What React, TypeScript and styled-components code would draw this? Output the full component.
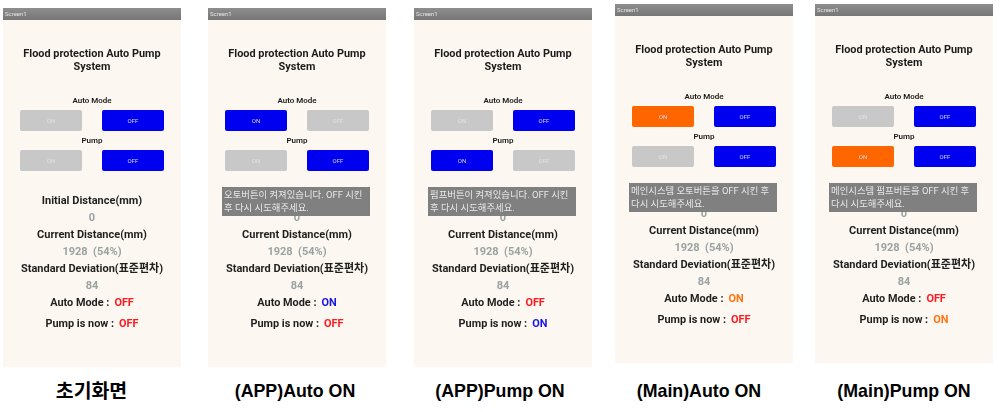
import React from 'react';
import styled, { createGlobalStyle } from 'styled-components';

const GlobalStyle = createGlobalStyle`
    html, body {
        margin: 0;
        padding: 0;
        background: #ffffff;
    }
    body {
        font-family: Roboto, "Noto Sans CJK KR", sans-serif;
    }
`;

const Board = styled.div`
    display: grid;
    grid-template-columns: 205px 206px 201px 200px 178px;
    width: 1001px;
    height: 412px;
    padding-left: 3px;
    box-sizing: border-box;
    overflow: hidden;
`;

const Column = styled.section`
    display: flex;
    flex-direction: column;
    width: 178px;
`;

const Phone = styled.div<{ $top: number }>`
    position: relative;
    display: flex;
    flex-direction: column;
    height: 359px;
    margin-top: ${({ $top }) => $top}px;
    background: #fcf7f0;
    filter: blur(0.5px);
`;

const TitleBar = styled.div`
    height: 12px;
    padding-left: 2px;
    background: linear-gradient(#8e8e8e, #767676);
    color: #e4e4e4;
    font-size: 6px;
    line-height: 12px;
`;

const Title = styled.h1`
    margin: 27px 0 0;
    padding: 0 16px;
    color: #1c1c1c;
    font-size: 10.9px;
    font-weight: 700;
    line-height: 13px;
    text-align: center;
`;

const ControlLabel = styled.div<{ $gap: number }>`
    margin-top: ${({ $gap }) => $gap}px;
    color: #1c1c1c;
    font-size: 8px;
    font-weight: 600;
    line-height: 10px;
    text-align: center;
`;

const ButtonRow = styled.div`
    display: flex;
    justify-content: space-between;
    margin-top: 4px;
    padding: 0 17px;
`;

type Tone = 'idle' | 'blue' | 'orange';

const toneColors: Record<Tone, string> = {
    idle: '#c8c8c8',
    blue: '#0000f0',
    orange: '#ff6600',
};

const Toggle = styled.div<{ $tone: Tone }>`
    width: 62px;
    height: 21px;
    border-radius: 2px;
    background: ${({ $tone }) => toneColors[$tone]};
    color: ${({ $tone }) => ($tone === 'idle' ? '#e2e2e2' : '#d8d8ff')};
    font-size: 6px;
    line-height: 21px;
    text-align: center;
`;

const Readouts = styled.div`
    display: flex;
    flex-direction: column;
    align-items: center;
    margin-top: 21px;
`;

const ReadoutTitle = styled.div`
    color: #1f1f1f;
    font-size: 11px;
    font-weight: 700;
    line-height: 17px;
    white-space: nowrap;
`;

const ReadoutValue = styled.div`
    color: #9aa3a3;
    font-size: 11px;
    font-weight: 700;
    line-height: 17px;
    white-space: pre;
`;

const StatusRow = styled.div<{ $gap: number }>`
    display: flex;
    gap: 5px;
    margin-top: ${({ $gap }) => $gap}px;
    color: #1f1f1f;
    font-size: 10.9px;
    font-weight: 700;
    line-height: 17px;
    white-space: nowrap;
`;

const StatusValue = styled.span<{ $on: string }>`
    color: ${({ $on }) => $on};
    font-weight: 700;
`;

const Toast = styled.div`
    position: absolute;
    top: 179px;
    left: 14px;
    width: 148px;
    height: 29px;
    padding: 2px 2px 0;
    box-sizing: border-box;
    background: #808080;
    color: #e8e8e8;
    font-family: Roboto, "Noto Sans CJK KR", sans-serif;
    font-size: 9.4px;
    line-height: 12.5px;
    word-break: keep-all;
`;

const Caption = styled.div<{ $top: number; $inset: number; $size: number }>`
    margin-top: ${({ $top }) => $top}px;
    padding-right: ${({ $inset }) => $inset}px;
    color: #000000;
    font-family: "Liberation Sans", "Noto Sans CJK KR", sans-serif;
    font-size: ${({ $size }) => $size}px;
    font-weight: 700;
    line-height: 20px;
    text-align: center;
    white-space: nowrap;
`;

const RED = '#ff1a22';
const BLUE = '#1616e8';
const ORANGE = '#ff7410';

const screens = [
    { caption: '초기화면', top: 8, captionGap: 14, inset: 1, size: 19.4, auto: ['idle', 'blue'], pump: ['idle', 'blue'], autoState: ['OFF', RED], pumpState: ['OFF', RED] },
    { caption: '(APP)Auto ON', top: 8, captionGap: 14, inset: 4, size: 17.8, auto: ['blue', 'idle'], pump: ['idle', 'blue'], autoState: ['ON', BLUE], pumpState: ['OFF', RED], toast: '오토버튼이 켜져있습니다. OFF 시킨 후 다시 시도해주세요.' },
    { caption: '(APP)Pump ON', top: 8, captionGap: 14, inset: 6, size: 17.8, auto: ['idle', 'blue'], pump: ['blue', 'idle'], autoState: ['OFF', RED], pumpState: ['ON', BLUE], toast: '펌프버튼이 켜져있습니다. OFF 시킨 후 다시 시도해주세요.' },
    { caption: '(Main)Auto ON', top: 4, captionGap: 18, inset: 10, size: 17.8, auto: ['orange', 'blue'], pump: ['idle', 'blue'], autoState: ['ON', ORANGE], pumpState: ['OFF', RED], toast: '메인시스템 오토버튼을 OFF 시킨 후 다시 시도해주세요.' },
    { caption: '(Main)Pump ON', top: 4, captionGap: 18, inset: 0, size: 17.8, auto: ['idle', 'blue'], pump: ['orange', 'blue'], autoState: ['OFF', RED], pumpState: ['ON', ORANGE], toast: '메인시스템 펌프버튼을 OFF 시킨 후 다시 시도해주세요.' },
];

export default function App() {
    return (
        <>
            <GlobalStyle />
            <Board>
                {screens.map((screen) => (
                    <Column key={screen.caption}>
                        <Phone $top={screen.top}>
                            <TitleBar>Screen1</TitleBar>
                            <Title>Flood protection Auto Pump System</Title>
                            <ControlLabel $gap={23}>Auto Mode</ControlLabel>
                            <ButtonRow>
                                <Toggle $tone={screen.auto[0] as Tone}>ON</Toggle>
                                <Toggle $tone={screen.auto[1] as Tone}>OFF</Toggle>
                            </ButtonRow>
                            <ControlLabel $gap={5}>Pump</ControlLabel>
                            <ButtonRow>
                                <Toggle $tone={screen.pump[0] as Tone}>ON</Toggle>
                                <Toggle $tone={screen.pump[1] as Tone}>OFF</Toggle>
                            </ButtonRow>
                            <Readouts>
                                <ReadoutTitle>Initial Distance(mm)</ReadoutTitle>
                                <ReadoutValue>0</ReadoutValue>
                                <ReadoutTitle>Current Distance(mm)</ReadoutTitle>
                                <ReadoutValue>1928  (54%)</ReadoutValue>
                                <ReadoutTitle>Standard Deviation(표준편차)</ReadoutTitle>
                                <ReadoutValue>84</ReadoutValue>
                                <StatusRow $gap={0}>
                                    Auto Mode :
                                    <StatusValue $on={screen.autoState[1]}>{screen.autoState[0]}</StatusValue>
                                </StatusRow>
                                <StatusRow $gap={4}>
                                    Pump is now :
                                    <StatusValue $on={screen.pumpState[1]}>{screen.pumpState[0]}</StatusValue>
                                </StatusRow>
                            </Readouts>
                            {screen.toast && <Toast>{screen.toast}</Toast>}
                        </Phone>
                        <Caption $top={screen.captionGap} $inset={screen.inset} $size={screen.size}>{screen.caption}</Caption>
                    </Column>
                ))}
            </Board>
        </>
    );
}
